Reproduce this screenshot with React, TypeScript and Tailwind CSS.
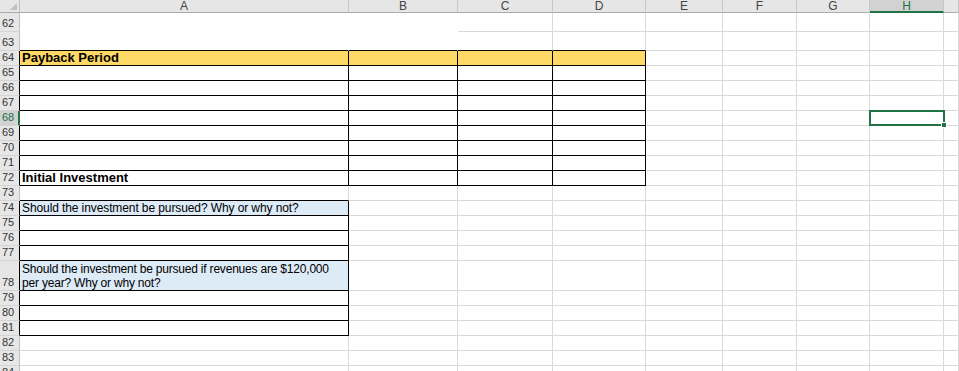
import React from "react"

const COLS = ["A", "B", "C", "D", "E", "F", "G", "H", ""]
const ROWS = Array.from({ length: 23 }, (_, i) => 62 + i)

// bordered table areas
const inBox = (r: number, c: number) => {
  if (r >= 64 && r <= 72 && c >= 1 && c <= 4) return true
  if (r >= 74 && r <= 81 && c === 1) return true
  return false
}

// white fill with no gridlines
const isBlank = (r: number, c: number) => (r === 62 || r === 63) && (c === 1 || c === 2)

const rowHeight = (r: number) => {
  if (r === 62 || r === 63) return "h-[19px]"
  if (r === 78) return "h-[30px]"
  return "h-[15px]"
}

const fill = (r: number, c: number) => {
  if (r === 64 && c >= 1 && c <= 4) return "bg-[#ffd966]"
  if ((r === 74 || r === 78) && c === 1) return "bg-[#ddebf7]"
  return "bg-white"
}

const cellText = (r: number, c: number) => {
  if (c !== 1) return null
  if (r === 64) return <span className="text-[13px] font-bold leading-[14px]">Payback Period</span>
  if (r === 72) return <span className="text-[13px] font-bold leading-[14px]">Initial Investment</span>
  if (r === 74)
    return (
      <span className="text-[12px] leading-[14px] tracking-[-0.1px]">
        Should the investment be pursued? Why or why not?
      </span>
    )
  if (r === 78)
    return (
      <span className="text-[12px] leading-[14px] tracking-[-0.2px]">
        Should the investment be pursued if revenues are $120,000
        <br />
        per year? Why or why not?
      </span>
    )
  return null
}

const Cell: React.FC<{ r: number; c: number }> = ({ r, c }) => {
  const blank = isBlank(r, c)
  const bottomBlack = inBox(r, c) || inBox(r + 1, c)
  const rightBlack = inBox(r, c) || inBox(r, c + 1)
  const selected = r === 68 && c === 8

  return (
    <div
      className={[
        "relative flex items-end overflow-visible whitespace-nowrap border-r border-b pl-[2px] text-black",
        rowHeight(r),
        fill(r, c),
        bottomBlack ? "border-b-black" : blank ? "border-b-white" : "border-b-[#d9d9d9]",
        rightBlack ? "border-r-black" : blank ? "border-r-white" : "border-r-[#d9d9d9]",
      ].join(" ")}
    >
      {cellText(r, c)}
      {selected && (
        <div className="absolute -left-[1px] -top-[1px] -right-[2px] -bottom-[1px] z-10 border-2 border-[#217346]">
          <div className="absolute -right-[4px] -bottom-[4px] h-[6px] w-[6px] border border-white bg-[#217346]" />
        </div>
      )}
    </div>
  )
}

const RowHeader: React.FC<{ r: number }> = ({ r }) => {
  const active = r === 68
  const boxed = inBox(r, 1)
  return (
    <div
      className={[
        "flex items-end border-b border-b-[#d4d4d4] pl-[2px] pb-[2px] text-[11px] leading-[11px]",
        rowHeight(r),
        active
          ? "border-r-2 border-r-[#217346] bg-[#d2d2d2] text-[#217346]"
          : boxed
            ? "border-r border-r-black bg-[#e6e6e6] text-[#333]"
            : "border-r border-r-[#bfbfbf] bg-[#e6e6e6] text-[#333]",
      ].join(" ")}
    >
      {r}
    </div>
  )
}

export default function App() {
  return (
    <div
      className="h-[371px] w-[959px] overflow-hidden bg-white"
      style={{ fontFamily: '"Liberation Sans", Arial, sans-serif' }}
    >
      <div className="grid grid-cols-[20px_329px_109px_95px_93px_77px_74px_73px_74px_1fr]">
        {/* corner */}
        <div className="relative h-[13px] border-r border-b border-r-[#bfbfbf] border-b-[#ababab] bg-[#e6e6e6]">
          <div className="absolute bottom-[2px] right-[2px] h-0 w-0 border-l-[7px] border-t-[7px] border-l-transparent border-t-transparent border-b-0 border-r-[7px] border-r-[#c0c0c0]" />
        </div>
        {COLS.map((col) => (
          <div
            key={col || "I"}
            className={[
              "flex h-[13px] items-center justify-center border-r border-r-[#c8c8c8] text-[12px] leading-[12px]",
              col === "H"
                ? "border-b-2 border-b-[#217346] bg-[#d2d2d2] text-[#217346]"
                : "border-b border-b-[#ababab] bg-[#e6e6e6] text-[#444]",
            ].join(" ")}
          >
            {col}
          </div>
        ))}

        {ROWS.map((r) => (
          <React.Fragment key={r}>
            <RowHeader r={r} />
            {COLS.map((_, i) => (
              <Cell key={i} r={r} c={i + 1} />
            ))}
          </React.Fragment>
        ))}
      </div>
    </div>
  )
}
